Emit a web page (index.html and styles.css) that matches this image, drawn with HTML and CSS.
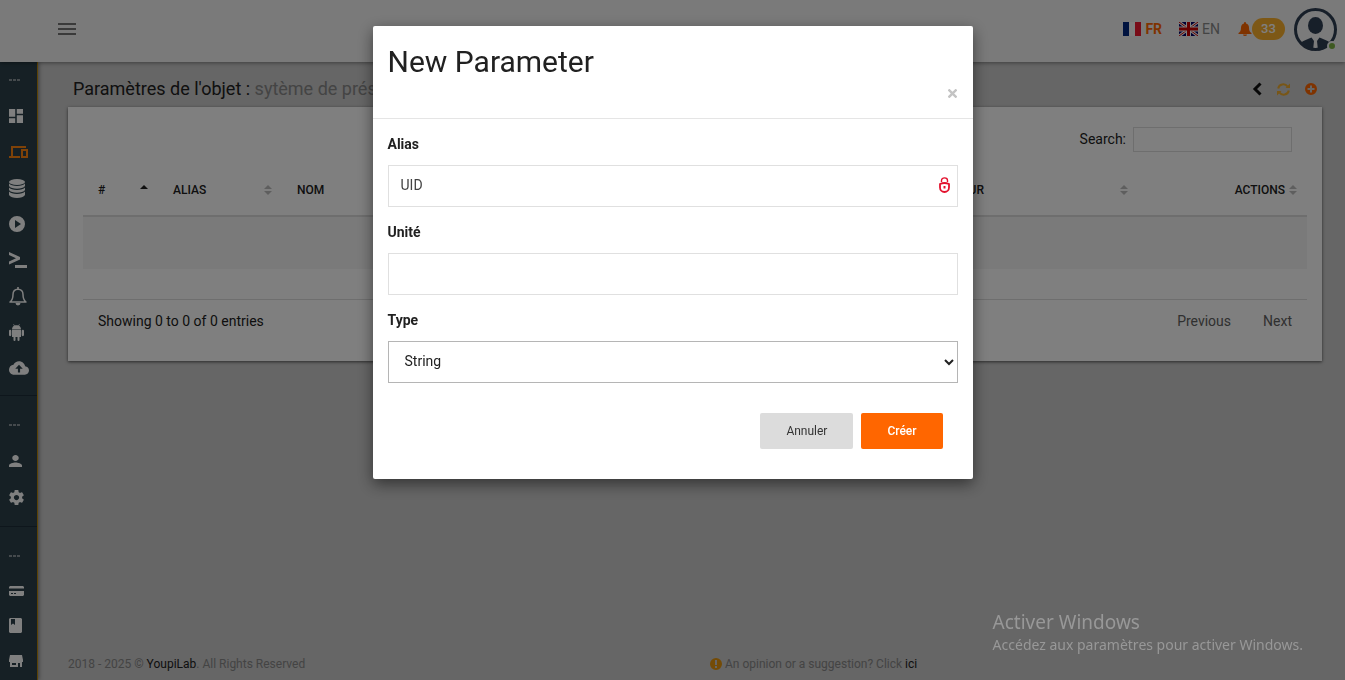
FILE: index.html
```html
<!DOCTYPE html>
<html lang="fr">
<head>
    <meta charset="UTF-8">
    <meta name="viewport" content="width=device-width, initial-scale=1.0">
    <link rel="stylesheet" href="styles.css">
    <title>YoupiLab - Paramètres de l'objet</title>
</head>
<body>
    <header class="topbar">
        <button type="button" class="menu-toggle" aria-label="Menu"><span></span><span></span><span></span></button>
        <div class="topbar-right">
            <a href="#" class="lang active">
                <svg width="18" height="14" viewBox="0 0 18 14"><path fill="#fff" d="M0 0h18v14H0z"/><path fill="#00267f" d="M0 0h6v14H0z"/><path fill="#f31830" d="M12 0h6v14h-6z"/></svg>
                FR
            </a>
            <a href="#" class="lang">
                <svg width="19" height="14" viewBox="0 0 19 14">
                    <path fill="#006" d="M0 0h19v14H0z"/>
                    <path stroke="#fff" stroke-width="3" d="M0 0l19 14M19 0L0 14"/>
                    <path stroke="#c00" stroke-width="1" d="M0 0l19 14M19 0L0 14"/>
                    <path stroke="#fff" stroke-width="5" d="M9.500 0v14M0 7h19"/>
                    <path stroke="#c00" stroke-width="3" d="M9.500 0v14M0 7h19"/>
                </svg>
                EN
            </a>
            <a href="#" class="notif">
                <svg width="14" height="14" viewBox="0 0 14 14"><path fill="#ff6600" d="M7 0a1 1 0 0 1 1 1v.4C10 2 11 3.500 11 5.500 11 9 12 10 13.500 11v1H.5v-1C2 10 3 9 3 5.500 3 3.500 4 2 6 1.400V1a1 1 0 0 1 1-1zM5 12.500h4a2 1.500 0 0 1-4 0z"/></svg>
                <span class="badge">33</span>
            </a>
            <a href="#" class="avatar" aria-label="Profil">
                <svg width="43" height="43" viewBox="0 0 43 43">
                    <circle cx="21.500" cy="21.500" r="20" fill="#fff" fill-opacity=".1" stroke="#2f3e52" stroke-width="3"/>
                    <ellipse cx="21.500" cy="17.500" rx="7.500" ry="8.500" fill="#2f3e52"/>
                    <path fill="#2f3e52" d="M6.500 35c3-3 7-3.500 11-5.500l2.500 3.500-1 9.500C14 42 9 39 6.500 35zM36.500 35c-3-3-7-3.500-11-5.500L23 33l1 9.500C29 42 34 39 36.500 35z"/>
                </svg>
                <span class="status"></span>
            </a>
        </div>
    </header>

    <div class="wrapper">
        <nav class="sidebar">
            <ul>
                <li class="dots"><i></i><i></i><i></i></li>
                <li><a href="#" aria-label="Tableau de bord"><svg width="14" height="14" viewBox="3 3 18 18"><path d="M3 13h8V3H3v10zm0 8h8v-6H3v6zm10 0h8V11h-8v10zm0-18v6h8V3h-8z"/></svg></a></li>
                <li class="active"><a href="#" aria-label="Objets"><svg width="19" height="12" viewBox="0 0 19 12"><path fill-rule="evenodd" d="M2 0h15v2H4v8h7v2H0v-2h2zM12 3h7v9h-7zM14 5v5h3V5z"/></svg></a></li>
                <li><a href="#" aria-label="Données"><svg width="16" height="19" viewBox="0 0 16 19"><ellipse cx="8" cy="3" rx="8" ry="3"/><path d="M0 4.500C2 7.800 14 7.800 16 4.500V7c-2 3.500-14 3.500-16 0zM0 8.500c2 3.300 14 3.300 16 0V11c-2 3.500-14 3.500-16 0zM0 12.500c2 3.300 14 3.300 16 0V16c-2 4-14 4-16 0z"/></svg></a></li>
                <li><a href="#" aria-label="Lancer"><svg width="16" height="16" viewBox="2 2 20 20"><path d="M12 2a10 10 0 1 0 0 20 10 10 0 0 0 0-20zM9.500 17V7l7.500 5z"/></svg></a></li>
                <li><a href="#" aria-label="Console"><svg width="18" height="16" viewBox="0 0 18 16"><path d="M0 0l11 5v2.500L0 12.500V9.500L7 6.300 0 3zM6 13h12v3H6z"/></svg></a></li>
                <li><a href="#" aria-label="Alertes"><svg width="18" height="19" viewBox="0 0 18 19"><path fill="none" stroke="#fff" stroke-width="1.500" stroke-linejoin="round" d="M9 2.200c-3 0-5 2-5 5.300 0 4.500-1 6-3 7.500h16c-2-1.500-3-3-3-7.500 0-3.300-2-5.300-5-5.300z"/><path d="M8.200 0h1.600v2.500H8.200zM6.500 16h5a2.500 2.500 0 0 1-5 0z"/></svg></a></li>
                <li><a href="#" aria-label="Android"><svg width="15" height="17" viewBox="0 0 15 17"><path d="M3 5.500C3 3.600 4 2.300 5 1.800L4.300.4l.5-.3.800 1.400c1.200-.5 2.600-.5 3.800 0L10.200.1l.5.3L10 1.800c1 .5 2 1.800 2 3.700zM3 6h9v7H3zM0 7a1 1 0 0 1 2.300 0v4A1 1 0 0 1 0 11zM12.700 7A1 1 0 0 1 15 7v4a1 1 0 0 1-2.300 0zM4.500 12h2v4a1 1 0 0 1-2 0zM8.500 12h2v4a1 1 0 0 1-2 0z"/></svg></a></li>
                <li><a href="#" aria-label="Cloud"><svg width="20" height="14" viewBox="0 4 24 16"><path d="M19.350 10.040C18.670 6.590 15.640 4 12 4 9.110 4 6.600 5.640 5.350 8.040 2.340 8.360 0 10.910 0 14c0 3.310 2.690 6 6 6h13c2.760 0 5-2.240 5-5 0-2.640-2.050-4.780-4.650-4.960zM13.300 13v4.500h-2.600V13H7.500L12 8l4.500 5z"/></svg></a></li>
            </ul>
            <ul>
                <li class="dots"><i></i><i></i><i></i></li>
                <li><a href="#" aria-label="Utilisateurs"><svg width="13" height="12" viewBox="4 4 16 16" preserveAspectRatio="none"><path d="M12 12c2.210 0 4-1.790 4-4s-1.790-4-4-4-4 1.790-4 4 1.790 4 4 4zm0 2c-2.670 0-8 1.340-8 4v2h16v-2c0-2.660-5.330-4-8-4z"/></svg></a></li>
                <li><a href="#" aria-label="Réglages"><svg width="15" height="15" viewBox="2 2 20 20"><path d="M19.430 12.980c.04-.32.07-.64.07-.98s-.03-.66-.07-.98l2.110-1.650c.19-.15.24-.42.12-.64l-2-3.460c-.12-.22-.39-.3-.61-.22l-2.490 1c-.52-.4-1.080-.73-1.690-.98l-.38-2.650C14.460 2.180 14.250 2 14 2h-4c-.25 0-.46.18-.49.42l-.38 2.650c-.61.25-1.170.59-1.690.98l-2.490-1c-.23-.09-.49 0-.61.22l-2 3.460c-.13.22-.07.49.12.64l2.110 1.650c-.04.32-.07.65-.07.98s.03.66.07.98l-2.110 1.650c-.19.15-.24.42-.12.64l2 3.460c.12.22.39.3.61.22l2.490-1c.52.4 1.080.73 1.690.98l.38 2.650c.03.24.24.42.49.42h4c.25 0 .46-.18.49-.42l.38-2.650c.61-.25 1.170-.59 1.690-.98l2.490 1c.23.09.49 0 .61-.22l2-3.460c.12-.22.07-.49-.12-.64l-2.110-1.650zM12 15.500c-1.930 0-3.500-1.570-3.500-3.500s1.570-3.500 3.500-3.500 3.500 1.570 3.500 3.500-1.570 3.500-3.500 3.500z"/></svg></a></li>
            </ul>
            <ul>
                <li class="dots"><i></i><i></i><i></i></li>
                <li><a href="#" aria-label="Paiement"><svg width="15" height="10" viewBox="0 0 15 10"><path fill-rule="evenodd" d="M1 0h13l1 1v1.500H0V1zM0 5h15v4l-1 1H1L0 9zM2 7v1h2V7zM5 7v1h2V7z"/></svg></a></li>
                <li><a href="#" aria-label="Documentation"><svg width="13" height="15" viewBox="0 0 13 15"><path fill-rule="evenodd" d="M1 0h11l1 1v13l-1 1H1l-1-1V1zM2 1v6l2-1.500L6 7V1z"/></svg></a></li>
                <li><a href="#" aria-label="Boutique"><svg width="14" height="12" viewBox="0 0 14 12"><path fill-rule="evenodd" d="M1 0h12l1 5v2h-1v5h-2V8H9v4H1V7H0V5zM3 8v2h4V8z"/></svg></a></li>
            </ul>
        </nav>

        <main class="content">
            <div class="page-head">
                <h1>Paramètres de l'objet : <small>sytème de présence</small></h1>
                <div class="tools">
                    <a href="#" aria-label="Retour"><svg width="10" height="14" viewBox="0 0 10 14"><path fill="none" stroke="#111" stroke-width="3" d="M8.500 1.500L3 7l5.500 5.500"/></svg></a>
                    <a href="#" aria-label="Actualiser"><svg width="13" height="13" viewBox="0 0 13 13"><path fill="none" stroke="#f0ad2e" stroke-width="2" d="M1.200 5.500C2 1 8 0 10.500 3.500M11.800 7.500C11 12 5 13 2.500 9.500"/><path fill="#f0ad2e" d="M13 .5V5H8.500zM0 12.500V8h4.500z"/></svg></a>
                    <a href="#" aria-label="Ajouter"><svg width="12" height="12" viewBox="0 0 12 12"><path fill="#ff6600" fill-rule="evenodd" d="M6 0a6 6 0 1 0 0 12A6 6 0 0 0 6 0zM5 2.500h2V5h2.500v2H7v2.500H5V7H2.500V5H5z"/></svg></a>
                </div>
            </div>

            <section class="card">
                <div class="search">
                    <label for="search">Search:</label>
                    <input type="search" id="search">
                </div>
                <table>
                    <thead>
                        <tr>
                            <th class="col-id asc"><div>#<span class="sort"></span></div></th>
                            <th class="col-alias"><div>Alias<span class="sort"></span></div></th>
                            <th><div>Nom<span class="sort"></span></div></th>
                            <th class="col-val"><div>Valeur<span class="sort"></span></div></th>
                            <th class="col-act"><div>Actions<span class="sort"></span></div></th>
                        </tr>
                    </thead>
                    <tbody>
                        <tr><td colspan="5"></td></tr>
                    </tbody>
                </table>
                <div class="table-foot">
                    <span>Showing 0 to 0 of 0 entries</span>
                    <div class="pager"><a href="#">Previous</a><a href="#">Next</a></div>
                </div>
            </section>

            <footer>
                <p>2018 - 2025 © <a href="#">YoupiLab</a>. All Rights Reserved</p>
                <p><svg width="12" height="12" viewBox="0 0 12 12"><path fill="#e8960c" fill-rule="evenodd" d="M6 0a6 6 0 1 0 0 12A6 6 0 0 0 6 0zM5 2h2v5H5zM5 8h2v2H5z"/></svg> An opinion or a suggestion? Click <a href="#">ici</a></p>
            </footer>
        </main>
    </div>

    <!-- New parameter popup -->
    <div class="overlay">
        <form class="modal" role="dialog" aria-labelledby="modalTitle">
            <div class="modal-header">
                <h2 id="modalTitle">New Parameter</h2>
                <button type="button" class="close" aria-label="Close"><svg width="9" height="9" viewBox="0 0 9 9"><path stroke="#c4c4c4" stroke-width="2.400" d="M.5.5l8 8M8.500.5l-8 8"/></svg></button>
            </div>
            <div class="modal-body">
                <label for="alias">Alias</label>
                <div class="field">
                    <input type="text" id="alias" value="UID">
                    <svg class="lock" width="11" height="16" viewBox="0 0 11 16"><path fill="none" stroke="#e3112d" stroke-width="1.400" d="M2.500 5V3.500C2.500 0 8.500 0 8.500 3.500V5"/><path fill="none" stroke="#e3112d" stroke-width="1.800" d="M1 7c3-1.300 6-1.300 9 0v3.500C10 13 8 15 5.500 15S1 13 1 10.500z"/><path fill="#e3112d" d="M4.500 9h2v2.500h-2z"/></svg>
                </div>
                <label for="unite">Unité</label>
                <div class="field">
                    <input type="text" id="unite">
                </div>
                <label for="type">Type</label>
                <div class="field">
                    <select id="type">
                        <option>String</option>
                    </select>
                </div>
            </div>
            <div class="modal-footer">
                <button type="button" class="btn">Annuler</button>
                <button type="submit" class="btn primary">Créer</button>
            </div>
        </form>
    </div>

    <div class="watermark">
        <p class="big">Activer Windows</p>
        <p>Accédez aux paramètres pour activer Windows.</p>
    </div>
</body>
</html>
```

FILE: styles.css
```css
* {
    box-sizing: border-box;
}
body {
    margin: 0;
    min-height: 100vh;
    display: flex;
    flex-direction: column;
    background-color: #cccccc;
    color: #212121;
    font-family: Roboto, sans-serif;
    font-size: 14px;
    line-height: 20px;
}
a {
    color: inherit;
    text-decoration: none;
}
p, h1, h2, ul {
    margin: 0;
    padding: 0;
}
svg {
    display: block;
}

/* Top bar */
.topbar {
    position: relative;
    z-index: 2;
    display: flex;
    align-items: center;
    justify-content: space-between;
    height: 62px;
    padding: 0 8px 0 58px;
    background-color: #f5f5f5;
    box-shadow: 0 1px 4px rgba(0, 0, 0, 0.4);
}
.menu-toggle {
    display: flex;
    flex-direction: column;
    gap: 3px;
    margin-bottom: 4px;
    padding: 0;
    border: 0;
    background: none;
    cursor: pointer;
}
.menu-toggle span {
    width: 18px;
    height: 2px;
    background-color: #757575;
}
.topbar-right {
    display: flex;
    align-items: center;
}
.lang {
    display: flex;
    align-items: center;
    gap: 4px;
    margin: 0 17px 5px 0;
    color: #888888;
}
.lang.active {
    color: #ff6600;
    font-weight: 700;
}
.notif {
    display: flex;
    align-items: center;
    margin: 0 9px 4px 1px;
}
.badge {
    width: 33px;
    border-radius: 11px;
    background-color: #fbb02d;
    color: #ffffff;
    font-size: 13px;
    font-weight: 500;
    line-height: 22px;
    text-align: center;
}
.avatar {
    position: relative;
    margin-bottom: 3px;
}
.status {
    position: absolute;
    right: 0;
    bottom: 0;
    width: 10px;
    height: 10px;
    border: 2px solid #f5f5f5;
    border-radius: 50%;
    background-color: #7cb342;
}

/* Sidebar */
.wrapper {
    flex: 1;
    display: flex;
}
.sidebar {
    flex: none;
    width: 38px;
    background-color: #2c414b;
    border-right: 1px solid #b8860b;
    box-shadow: 1px 0 4px rgba(0, 0, 0, 0.4);
}
.sidebar ul {
    list-style: none;
    padding: 11px 0;
}
.sidebar ul:first-child {
    padding: 0 0 9px;
}
.sidebar ul:last-child {
    padding-bottom: 0;
}
.sidebar ul + ul {
    border-top: 1px solid #1c2d38;
}
.sidebar li {
    display: flex;
    align-items: center;
    height: 36px;
    padding-left: 9px;
}
.sidebar ul:last-child li {
    height: 35px;
}
.sidebar svg {
    fill: #ffffff;
}
.sidebar .active svg {
    fill: #ff8411;
}
.dots {
    gap: 1px;
}
.dots i {
    width: 3px;
    height: 2px;
    background-color: #8b959b;
}

/* Content */
.content {
    flex: 1;
    display: flex;
    flex-direction: column;
    padding: 14px 23px 6px 30px;
}
.page-head {
    display: flex;
    align-items: center;
    justify-content: space-between;
    height: 26px;
    margin-bottom: 5px;
    padding: 0 5px;
}
.page-head h1 {
    font-size: 18px;
    font-weight: 400;
}
.page-head small {
    color: #888888;
    font-size: 18px;
}
.tools {
    display: flex;
    align-items: center;
    gap: 15px;
}
.card {
    padding: 20px 15px 30px;
    background-color: #ffffff;
    box-shadow: 0 1px 3px rgba(0, 0, 0, 0.6);
}
.search {
    display: flex;
    justify-content: flex-end;
    gap: 7px;
    height: 25px;
    margin: 0 15px 12px 0;
    line-height: 24px;
}
.search input {
    width: 159px;
    height: 25px;
    border: 1px solid #dcdcdc;
    background: none;
}
table {
    width: 100%;
    table-layout: fixed;
    border-collapse: collapse;
}
th {
    height: 52px;
    padding: 0 10px 0 15px;
    border-bottom: 2px solid #dcdcdc;
    font-size: 12px;
    font-weight: 500;
    text-align: left;
    text-transform: uppercase;
}
th div {
    display: flex;
    align-items: center;
    justify-content: space-between;
}
.col-id {
    width: 75px;
}
.col-alias {
    width: 124px;
}
.col-val {
    width: 213px;
}
.col-act {
    width: 169px;
}
.col-act div {
    justify-content: flex-end;
    gap: 4px;
}
.sort {
    display: flex;
    flex-direction: column;
    gap: 2px;
}
.sort::before, .sort::after {
    content: "";
    border: 4px solid transparent;
    border-top: 0;
    border-bottom-color: #bdbdbd;
}
.sort::after {
    border-top: 4px solid #bdbdbd;
    border-bottom: 0;
}
.asc .sort::before {
    border-bottom-color: #212121;
}
.asc .sort::after {
    border-top-color: transparent;
}
td {
    height: 53px;
    background-color: #f5f5f5;
}
.table-foot {
    display: flex;
    justify-content: space-between;
    margin-top: 30px;
    padding: 11px 15px 0;
    border-top: 1px solid #dcdcdc;
}
.pager {
    display: flex;
    gap: 32px;
    color: #616161;
}
footer {
    display: grid;
    grid-template-columns: 1fr 1fr;
    gap: 30px;
    margin-top: auto;
    color: #888888;
    font-size: 12px;
}
footer a {
    color: #212121;
}
footer svg {
    display: inline-block;
    vertical-align: -2px;
}

/* Popup */
.overlay {
    position: fixed;
    z-index: 10;
    inset: 0;
    display: flex;
    align-items: flex-start;
    justify-content: center;
    padding-top: 26px;
    background-color: rgba(0, 0, 0, 0.5);
}
.modal {
    width: 600px;
    border-radius: 2px;
    background-color: #ffffff;
    box-shadow: 0 5px 15px rgba(0, 0, 0, 0.5);
}
.modal-header {
    display: flex;
    flex-direction: column;
    padding: 15px;
    border-bottom: 1px solid #e5e5e5;
}
.modal-header h2 {
    font-size: 30px;
    font-weight: 400;
    line-height: 42px;
}
.close {
    align-self: flex-end;
    margin: 6px 1px 5px;
    padding: 0;
    border: 0;
    background: none;
    cursor: pointer;
}
.modal-body {
    padding: 15px 15px 0;
}
.modal-body label {
    display: block;
    margin-bottom: 11px;
    font-weight: 700;
}
.field {
    position: relative;
    margin-bottom: 15px;
}
.field input, .field select {
    display: block;
    width: 100%;
    height: 42px;
    padding: 0 12px 2px;
    border: 1px solid #e0e0e0;
    background-color: #ffffff;
    color: #424242;
    font-family: inherit;
    font-size: 14px;
}
.field select {
    border-color: #b5b5b5;
    border-radius: 0;
    color: #212121;
}
.lock {
    position: absolute;
    top: 12px;
    right: 8px;
}
.modal-footer {
    display: flex;
    justify-content: flex-end;
    gap: 8px;
    padding: 15px 30px 30px;
}
.btn {
    height: 36px;
    padding: 0 26px;
    border: 0;
    border-radius: 2px;
    background-color: #dcdcdc;
    color: #333333;
    font-family: inherit;
    font-size: 12px;
    cursor: pointer;
}
.btn.primary {
    background-color: #ff6600;
    color: #ffffff;
    font-weight: 500;
}

.watermark {
    position: fixed;
    z-index: 11;
    right: 42px;
    bottom: 25px;
    color: #989898;
    font-family: "Noto Sans", sans-serif;
    font-size: 14px;
    pointer-events: none;
}
.watermark .big {
    font-size: 19px;
    line-height: 26px;
}
```
